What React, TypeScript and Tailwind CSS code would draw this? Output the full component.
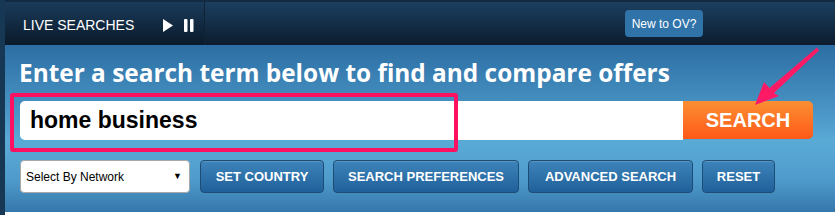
import React from "react";

const btn =
  "h-[33px] rounded-[4px] border border-[#1d4c74] bg-[linear-gradient(#3d84ba,#20609a)] text-white font-bold text-[13px] flex items-center justify-center shadow-[inset_0_1px_0_rgba(255,255,255,0.15)]";

export default function App() {
  return (
    <div className="w-[835px] h-[215px] flex bg-[#15324d] overflow-hidden" style={{ fontFamily: '"Liberation Sans", Arial, sans-serif' }}>
      <div className="w-[5px] h-full bg-[#163855]" />
      <div className="flex-1 flex flex-col">
        <div className="h-[45px] flex border-t-2 border-[#132b42] bg-[linear-gradient(#1c3f60,#0c1c2d)]">
          <div className="w-[200px] flex items-center pl-[18px] pt-[3px] border-r border-[#0f2336] bg-[linear-gradient(#1a3b5a,#0a1a2a)]">
            <span className="text-white text-[14px] w-[135px]">LIVE SEARCHES</span>
            <svg width="11" height="13" viewBox="0 0 11 13" className="ml-[5px]">
              <polygon points="0,0 10,6.5 0,13" fill="#fff" />
            </svg>
            <svg width="10" height="13" viewBox="0 0 10 13" className="ml-[10px]">
              <rect x="0" y="0" width="3.5" height="13" rx="1" fill="#fff" />
              <rect x="6" y="0" width="3.5" height="13" rx="1" fill="#fff" />
            </svg>
          </div>
          <div className="flex-1 flex items-center">
            <div className="ml-[420px] h-[27px] w-[78px] rounded-[4px] bg-[#2f73a9] text-white text-[12px] flex items-center justify-center">New to OV?</div>
          </div>
        </div>
        <div className="relative h-[167px] bg-[linear-gradient(#2c6ea3_0%,#4a95c6_40%,#5aaad6_58%,#4f9ccc_80%,#3677ab_100%)] pl-[15px]">
          <h1 className="text-white font-bold text-[24.4px] leading-[28px] pt-[14px] whitespace-nowrap -ml-[1px]" style={{ fontFamily: '"Open Sans", sans-serif' }}>
            Enter a search term below to find and compare offers
          </h1>
          <div className="flex mt-[14px] h-[39px]">
            <div className="w-[663px] h-full bg-white rounded-l-[5px] flex items-center pl-[10px]">
              <span className="text-black font-bold text-[23px]">home business</span>
            </div>
            <div className="w-[130px] h-[38px] rounded-r-[5px] bg-[linear-gradient(#fa8f32,#ff5918)] text-white font-bold text-[20px] flex items-center justify-center">SEARCH</div>
          </div>
          <div className="flex mt-[20px] items-center">
            <div className="w-[170px] h-[33px] bg-white rounded-[4px] border border-[#a9a9a9] flex items-center justify-between pl-[5px] pr-[7px]">
              <span className="text-black text-[12px]">Select By Network</span>
              <span className="text-black text-[9px]">▼</span>
            </div>
            <div className={btn + " ml-[10px] w-[124px]"}>SET COUNTRY</div>
            <div className={btn + " ml-[9px] w-[186px]"}>SEARCH PREFERENCES</div>
            <div className={btn + " ml-[9px] w-[165px]"}>ADVANCED SEARCH</div>
            <div className={btn + " ml-[9px] w-[73px]"}>RESET</div>
          </div>
          <div className="absolute left-[5px] top-[48px] w-[448px] h-[59px] border-[4px] border-[#ff1060] rounded-[3px] pointer-events-none" />
          <svg className="absolute left-0 top-0 pointer-events-none" width="830" height="167" viewBox="5 45 830 167">
            <polygon points="817,47.5 819,50.5 774,93 779,96 755,105 764,82 769.5,88" fill="#ff1a66" />
          </svg>
        </div>
        <div className="flex-1 bg-white" />
      </div>
    </div>
  );
}
